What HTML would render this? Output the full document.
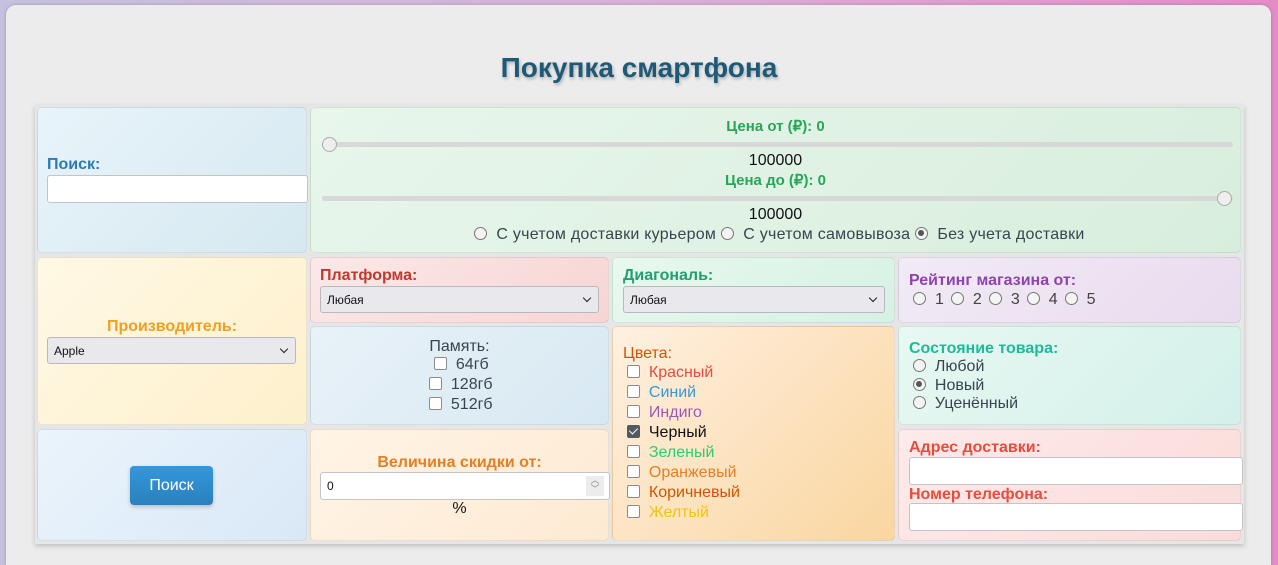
<!DOCTYPE html>
<html><head><meta charset="utf-8"><style>
*{box-sizing:border-box;margin:0;padding:0}
body{width:1278px;height:556px;overflow:hidden;background:linear-gradient(90deg,#c4c0de,#d8b0d8 50%,#e48cc8);font-family:"Liberation Sans",sans-serif;position:relative}
.card{position:absolute;left:6px;top:5px;width:1265px;height:560px;background:#ececec;border-radius:10px 10px 0 0;box-shadow:0 0 3px rgba(0,0,0,.2)}
h1{position:absolute;left:0;width:1278px;top:52px;text-align:center;font-size:28px;color:#1e5a78;font-weight:bold;text-shadow:1px 2px 3px rgba(0,0,0,.25)}
.grid{position:absolute;left:35px;top:105px;width:1209px;height:439px;background:#e6e6e6;box-shadow:0 2px 5px rgba(0,0,0,.2)}
.c{position:absolute;border-radius:5px;border:1px solid rgba(0,0,0,.08)}
.lb{font-weight:bold;font-size:16px}
.sel{position:absolute;height:27px;background:#e9e8ed;border:1px solid #b8b8c0;border-radius:3px;font-size:12px;padding:6px 6px;color:#111}
.sel:after{content:"";position:absolute;right:8px;top:8px;width:5px;height:5px;border-right:1.5px solid #222;border-bottom:1.5px solid #222;transform:rotate(45deg)}
.inp{position:absolute;height:28px;background:#fff;border:1px solid #c4c4c8;border-radius:3px}
.r{display:inline-block;width:13px;height:13px;border:1.5px solid #777;border-radius:50%;vertical-align:-1px;background:#f4f4f4;position:relative}
.r.on:after{content:"";position:absolute;left:2px;top:2px;width:6px;height:6px;border-radius:50%;background:#555}
.cb{display:inline-block;width:13px;height:13px;border:1.5px solid #8a8a92;border-radius:2px;background:#fff;vertical-align:-1px;position:relative}
.cb.on{background:#525a62;border-color:#525a62}
.cb.on:after{content:"";position:absolute;left:3px;top:0px;width:4px;height:7px;border-right:1.5px solid #fff;border-bottom:1.5px solid #fff;transform:rotate(45deg)}
.t{position:absolute;font-size:16px;color:#333;white-space:nowrap}
.rt .r{margin-right:9px}
.rt b{font-weight:normal;margin-right:7px}
</style></head><body>
<div class="card"></div>
<h1>Покупка смартфона</h1>
<div class="grid"></div>

<div class="c" style="left:37px;top:107px;width:270px;height:146px;background:linear-gradient(135deg,#e8f4fa,#d6e8f0)"></div>
<div class="t lb" style="left:47px;top:156px;color:#2a7ab8">Поиск:</div>
<div class="inp" style="left:47px;top:175px;width:261px"></div>

<div class="c" style="left:310px;top:107px;width:931px;height:146px;background:linear-gradient(135deg,#e8f6ec,#d8eedd)"></div>
<div class="t lb" style="left:310px;width:931px;text-align:center;top:117px;color:#27a558;font-size:15px">Цена от (₽): 0</div>
<div style="position:absolute;left:322px;top:142px;width:911px;height:5px;background:#d8d8d8;border-radius:3px"></div>
<div style="position:absolute;left:322px;top:137px;width:15px;height:15px;border-radius:50%;background:#eee;border:1px solid #aaa"></div>
<div class="t" style="left:310px;width:931px;text-align:center;top:152px;color:#111">100000</div>
<div class="t lb" style="left:310px;width:931px;text-align:center;top:171px;color:#27a558;font-size:15px">Цена до (₽): 0</div>
<div style="position:absolute;left:322px;top:196px;width:911px;height:5px;background:#d8d8d8;border-radius:3px"></div>
<div style="position:absolute;left:1217px;top:191px;width:15px;height:15px;border-radius:50%;background:#eee;border:1px solid #aaa"></div>
<div class="t" style="left:310px;width:931px;text-align:center;top:206px;color:#111">100000</div>
<div class="t" style="left:474px;top:226px;color:#3a4450;font-size:16px;letter-spacing:0.25px"><span class="r"></span>&nbsp; С учетом доставки курьером <span class="r"></span>&nbsp; С учетом самовывоза <span class="r on"></span>&nbsp; Без учета доставки</div>

<div class="c" style="left:37px;top:257px;width:270px;height:168px;background:linear-gradient(135deg,#fff8e4,#fdf0cc)"></div>
<div class="t lb" style="left:37px;width:270px;text-align:center;top:318px;color:#f0a020">Производитель:</div>
<div class="sel" style="left:47px;top:337px;width:249px">Apple</div>

<div class="c" style="left:310px;top:257px;width:299px;height:66px;background:linear-gradient(135deg,#fbe8e8,#f6d6d4)"></div>
<div class="t lb" style="left:320px;top:267px;color:#c0392b">Платформа:</div>
<div class="sel" style="left:320px;top:286px;width:279px">Любая</div>

<div class="c" style="left:612px;top:257px;width:283px;height:66px;background:linear-gradient(135deg,#e8f8ee,#d6f2e4)"></div>
<div class="t lb" style="left:623px;top:267px;color:#20a070">Диагональ:</div>
<div class="sel" style="left:623px;top:286px;width:262px">Любая</div>

<div class="c" style="left:898px;top:257px;width:343px;height:66px;background:linear-gradient(135deg,#f2eaf6,#e8dcee)"></div>
<div class="t lb" style="left:909px;top:272px;color:#8e44ad">Рейтинг магазина от:</div>
<div class="t rt" style="left:913px;top:291px;color:#444"><span class="r"></span><b>1</b><span class="r"></span><b>2</b><span class="r"></span><b>3</b><span class="r"></span><b>4</b><span class="r"></span><b>5</b></div>

<div class="c" style="left:310px;top:326px;width:299px;height:99px;background:linear-gradient(135deg,#e8f2f8,#d8e8f2)"></div>
<div class="t" style="left:310px;width:299px;text-align:center;top:338px;color:#3a4450">Память:</div>
<div class="t" style="left:434px;top:356px;color:#3a4450"><span class="cb"></span>&nbsp;&nbsp;64гб</div>
<div class="t" style="left:429px;top:376px;color:#3a4450"><span class="cb"></span>&nbsp;&nbsp;128гб</div>
<div class="t" style="left:429px;top:396px;color:#3a4450"><span class="cb"></span>&nbsp;&nbsp;512гб</div>

<div class="c" style="left:612px;top:326px;width:283px;height:215px;background:linear-gradient(135deg,#fff0e0,#fad6a0)"></div>
<div class="t" style="left:623px;top:345px;color:#d35400">Цвета:</div>
<div class="t" style="left:627px;top:364px;color:#e74c3c"><span class="cb"></span>&nbsp; Красный</div>
<div class="t" style="left:627px;top:384px;color:#3498db"><span class="cb"></span>&nbsp; Синий</div>
<div class="t" style="left:627px;top:404px;color:#9b59b6"><span class="cb"></span>&nbsp; Индиго</div>
<div class="t" style="left:627px;top:424px;color:#111"><span class="cb on"></span>&nbsp; Черный</div>
<div class="t" style="left:627px;top:444px;color:#2ecc71"><span class="cb"></span>&nbsp; Зеленый</div>
<div class="t" style="left:627px;top:464px;color:#e67e22"><span class="cb"></span>&nbsp; Оранжевый</div>
<div class="t" style="left:627px;top:484px;color:#d35400"><span class="cb"></span>&nbsp; Коричневый</div>
<div class="t" style="left:627px;top:504px;color:#f1c40f"><span class="cb"></span>&nbsp; Желтый</div>

<div class="c" style="left:898px;top:326px;width:343px;height:99px;background:linear-gradient(135deg,#e8f8f2,#d4f0ea)"></div>
<div class="t lb" style="left:909px;top:340px;color:#1abc9c">Состояние товара:</div>
<div class="t" style="left:913px;top:358px;color:#3a4450"><span class="r"></span>&nbsp; Любой</div>
<div class="t" style="left:913px;top:377px;color:#3a4450"><span class="r on"></span>&nbsp; Новый</div>
<div class="t" style="left:913px;top:395px;color:#3a4450"><span class="r"></span>&nbsp; Уценённый</div>

<div class="c" style="left:37px;top:429px;width:270px;height:112px;background:linear-gradient(135deg,#eaf4fc,#dae8f6)"></div>
<div style="position:absolute;left:130px;top:466px;width:83px;height:39px;border-radius:4px;background:linear-gradient(#3498db,#2a80bc);color:#fff;font-size:16px;text-align:center;line-height:39px;box-shadow:0 2px 4px rgba(0,0,0,.2)">Поиск</div>

<div class="c" style="left:310px;top:429px;width:299px;height:112px;background:linear-gradient(135deg,#fff4e6,#fdead2)"></div>
<div class="t lb" style="left:310px;width:299px;text-align:center;top:454px;color:#e67e22">Величина скидки от:</div>
<div class="inp" style="left:320px;top:472px;width:290px;font-size:12px;padding:6px 6px;color:#111">0<span style="position:absolute;right:5px;top:3px;width:18px;height:20px;background:#ececec;font-size:9px;color:#888;text-align:center;line-height:9px">︿<br>﹀</span></div>
<div class="t" style="left:310px;width:299px;text-align:center;top:500px;color:#111">%</div>

<div class="c" style="left:898px;top:429px;width:343px;height:112px;background:linear-gradient(135deg,#fdeaea,#fadcda)"></div>
<div class="t lb" style="left:909px;top:439px;color:#e74c3c">Адрес доставки:</div>
<div class="inp" style="left:909px;top:457px;width:334px"></div>
<div class="t lb" style="left:909px;top:486px;color:#e74c3c">Номер телефона:</div>
<div class="inp" style="left:909px;top:503px;width:334px"></div>
</body></html>
